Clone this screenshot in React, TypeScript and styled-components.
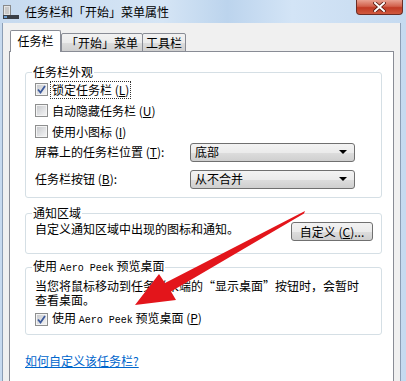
import React from "react";
import styled, { createGlobalStyle } from "styled-components";

const GlobalStyle = createGlobalStyle`
  html, body {
    margin: 0;
    padding: 0;
  }
  body {
    width: 406px;
    height: 381px;
    overflow: hidden;
    font-family: "Noto Sans CJK SC", "Liberation Sans", sans-serif;
    font-size: 12px;
    color: #000;
  }
`;

const Window = styled.div`
  position: relative;
  width: 406px;
  height: 381px;
  display: flex;
  flex-direction: column;
  overflow: hidden;
  background: linear-gradient(
    90deg,
    #c7daef 0%,
    #d5e5f5 40%,
    #bcd4ed 56%,
    #d3e4f6 72%,
    #c5daf0 100%
  );
`;

const TitleBar = styled.div`
  height: 23px;
  flex-shrink: 0;
  display: flex;
  align-items: center;
  padding-left: 3px;
`;

const TitleText = styled.span`
  margin-left: 6px;
  font-size: 12px;
  line-height: 14px;
  color: #000;
`;

const CloseButton = styled.div`
  align-self: flex-start;
  margin-left: auto;
  margin-right: 3px;
  width: 47px;
  height: 15px;
  box-sizing: border-box;
  border: 1px solid #6b2d25;
  border-top: none;
  border-radius: 0 0 4px 4px;
  background: linear-gradient(180deg, #e9a191 0%, #d2614c 45%, #c13a24 55%, #d05a3f 100%);
  display: flex;
  align-items: center;
  justify-content: center;
`;

const Client = styled.div`
  flex: 1;
  display: flex;
  flex-direction: column;
  margin: 0 5px 0 2px;
  padding: 7px 6px 0 6px;
  background: #f0f0f0;
  border-left: 1px solid #8c9eb5;
  border-right: 1px solid #8c9eb5;
`;

const TabStrip = styled.div`
  display: flex;
  align-items: flex-end;
  padding-left: 1px;
  margin-bottom: -1px;
  position: relative;
  z-index: 1;
`;

const Tab = styled.div<{ $active?: boolean; $width: number }>`
  box-sizing: border-box;
  width: ${(p) => p.$width}px;
  height: ${(p) => (p.$active ? 22 : 19)}px;
  margin-left: ${(p) => (p.$active ? 0 : -1)}px;
  border: 1px solid #898c95;
  border-bottom: ${(p) => (p.$active ? "none" : "1px solid #898c95")};
  border-radius: 2px 2px 0 0;
  background: ${(p) =>
    p.$active ? "#fff" : "linear-gradient(180deg, #f2f2f2 0%, #ebebeb 50%, #dddddd 51%, #cfcfcf 100%)"};
  display: flex;
  align-items: center;
  justify-content: center;
  padding-bottom: ${(p) => (p.$active ? 1 : 0)}px;
  line-height: 14px;
  &:first-child {
    margin-left: 0;
  }
`;

const TabSpacer = styled.div`
  width: 1px;
`;

const Panel = styled.div`
  flex: 1;
  display: flex;
  flex-direction: column;
  background: #fff;
  border: 1px solid #898c95;
  border-bottom: none;
  padding: 13px 11px 0 15px;
`;

const Group = styled.fieldset<{ $top: number; $bottom: number }>`
  margin: ${(p) => p.$top}px 0 0 0;
  padding: 0 8px ${(p) => p.$bottom}px 9px;
  border: 1px solid #d5dfe5;
  border-radius: 3px;
  min-width: 0;
`;

const Legend = styled.legend`
  padding: 0 1px;
  margin-left: -3px;
  font-size: 12px;
  line-height: 14px;
`;

const CheckRow = styled.label<{ $top?: number }>`
  margin-top: ${(p) => p.$top ?? 0}px;
  height: 21px;
  display: flex;
  align-items: center;
  gap: 3px;
  line-height: 14px;
`;

const CheckLabel = styled.span<{ $focused?: boolean }>`
  padding: 1px 1px;
  outline: ${(p) => (p.$focused ? "1px dotted #333" : "none")};
  outline-offset: 0;
`;

const Box = styled.span`
  box-sizing: border-box;
  width: 13px;
  height: 13px;
  flex-shrink: 0;
  border: 1px solid #8e8f8f;
  background: linear-gradient(135deg, #c4c6c9 0%, #e3e4e6 60%, #f6f6f6 100%);
  box-shadow: inset 0 0 0 1px #f4f4f4;
  display: flex;
  align-items: center;
  justify-content: center;
`;

const SelectRow = styled.div<{ $top: number }>`
  margin-top: ${(p) => p.$top}px;
  height: 20px;
  display: grid;
  grid-template-columns: 155px 165px;
  align-items: center;
  line-height: 14px;
`;

const Select = styled.div`
  box-sizing: border-box;
  height: 19px;
  border: 1px solid #707070;
  border-radius: 3px;
  background: linear-gradient(180deg, #f3f3f3 0%, #ebebeb 50%, #dddddd 51%, #cfcfcf 100%);
  display: flex;
  align-items: center;
  padding: 0 7px 0 4px;
  line-height: 14px;
`;

const Arrow = styled.span`
  margin-left: auto;
  width: 0;
  height: 0;
  border-left: 4px solid transparent;
  border-right: 4px solid transparent;
  border-top: 4px solid #000;
`;

const NotifyRow = styled.div`
  height: 23px;
  display: flex;
  align-items: flex-start;
  justify-content: space-between;
  line-height: 14px;
`;

const NotifyText = styled.span`
  margin-top: 2px;
`;

const Button = styled.div`
  box-sizing: border-box;
  margin-top: 2px;
  width: 82px;
  height: 19px;
  border: 1px solid #707070;
  border-radius: 3px;
  background: linear-gradient(180deg, #f2f2f2 0%, #ebebeb 50%, #dddddd 51%, #cfcfcf 100%);
  display: flex;
  align-items: center;
  justify-content: center;
  line-height: 14px;
`;

const Para = styled.div`
  margin-top: 3px;
  line-height: 14px;
`;

const Quote = styled.span`
  font-family: "Noto Sans CJK SC", sans-serif;
  display: inline-block;
  width: 12px;
  text-align: center;
`;

const Latin = styled.span`
  font-family: "Liberation Mono", monospace;
  font-size: 10px;
`;

const HelpLink = styled.a`
  margin-top: 19px;
  align-self: flex-start;
  color: #0066cc;
  text-decoration: underline;
  line-height: 14px;
  cursor: pointer;
`;

const Overlay = styled.svg`
  position: absolute;
  left: 0;
  top: 0;
  pointer-events: none;
`;

const Key: React.FC<{ k: string }> = ({ k }) => (
  <>
    {" "}(<u>{k}</u>)
  </>
);

const CheckBox: React.FC<{ checked?: boolean }> = ({ checked }) => (
  <Box>
    {checked && (
      <svg width="9" height="9" viewBox="0 0 9 9">
        <path d="M1 4.5 L3.5 7.5 L8 1" fill="none" stroke="#3d5a9c" strokeWidth="1.8" />
      </svg>
    )}
  </Box>
);

const TaskbarIcon = () => (
  <svg width="16" height="14" viewBox="0 0 16 14">
    <rect x="0.5" y="0.5" width="7" height="10" fill="#e4e4e4" stroke="#8a8a8a" />
    <rect x="2" y="2" width="4" height="7" fill="#c9c9c9" />
    <rect x="0" y="10" width="16" height="4" fill="#3a3f47" />
    <rect x="1" y="11" width="3" height="2" fill="#6b9fd4" />
  </svg>
);

const CloseGlyph = () => (
  <svg width="13" height="10" viewBox="0 0 13 10">
    <path d="M2 1 L11 9 M11 1 L2 9" stroke="#5a1a10" strokeWidth="3.6" strokeLinecap="square" />
    <path d="M2 1 L11 9 M11 1 L2 9" stroke="#fff" strokeWidth="2" strokeLinecap="square" />
  </svg>
);

const App: React.FC = () => (
  <Window>
    <GlobalStyle />
    <TitleBar>
      <TaskbarIcon />
      <TitleText>任务栏和「开始」菜单属性</TitleText>
      <CloseButton>
        <CloseGlyph />
      </CloseButton>
    </TitleBar>
    <Client>
      <TabStrip>
        <Tab $active $width={51}>任务栏</Tab>
        <TabSpacer />
        <Tab $width={82}>「开始」菜单</Tab>
        <Tab $width={44}>工具栏</Tab>
      </TabStrip>
      <Panel>
        <Group $top={0} $bottom={8}>
          <Legend>任务栏外观</Legend>
          <CheckRow>
            <CheckBox checked />
            <CheckLabel $focused>
              锁定任务栏<Key k="L" />
            </CheckLabel>
          </CheckRow>
          <CheckRow>
            <CheckBox />
            <CheckLabel>
              自动隐藏任务栏<Key k="U" />
            </CheckLabel>
          </CheckRow>
          <CheckRow>
            <CheckBox />
            <CheckLabel>
              使用小图标<Key k="I" />
            </CheckLabel>
          </CheckRow>
          <SelectRow $top={0}>
            <span>
              屏幕上的任务栏位置<Key k="T" />:
            </span>
            <Select>
              底部
              <Arrow />
            </Select>
          </SelectRow>
          <SelectRow $top={7}>
            <span>
              任务栏按钮<Key k="B" />:
            </span>
            <Select>
              从不合并
              <Arrow />
            </Select>
          </SelectRow>
        </Group>
        <Group $top={8} $bottom={10}>
          <Legend>通知区域</Legend>
          <NotifyRow>
            <NotifyText>自定义通知区域中出现的图标和通知。</NotifyText>
            <Button>
              自定义<Key k="C" />...
            </Button>
          </NotifyRow>
        </Group>
        <Group $top={5} $bottom={4}>
          <Legend>
            使用 <Latin>Aero Peek</Latin> 预览桌面
          </Legend>
          <Para>
            当您将鼠标移动到任务栏末端的<Quote>“</Quote>显示桌面<Quote>”</Quote>按钮时，会暂时
            <br />
            查看桌面。
          </Para>
          <CheckRow $top={2}>
            <CheckBox checked />
            <CheckLabel>
              使用 <Latin>Aero Peek</Latin> 预览桌面<Key k="P" />
            </CheckLabel>
          </CheckRow>
        </Group>
        <HelpLink>如何自定义该任务栏?</HelpLink>
      </Panel>
    </Client>
    <Overlay width="406" height="381" viewBox="0 0 406 381">
      <polygon
        points="305,211 165,283 159,274 135,305 176,300 171,291.5 304,213.5"
        fill="#e3151b"
      />
    </Overlay>
  </Window>
);

export default App;
